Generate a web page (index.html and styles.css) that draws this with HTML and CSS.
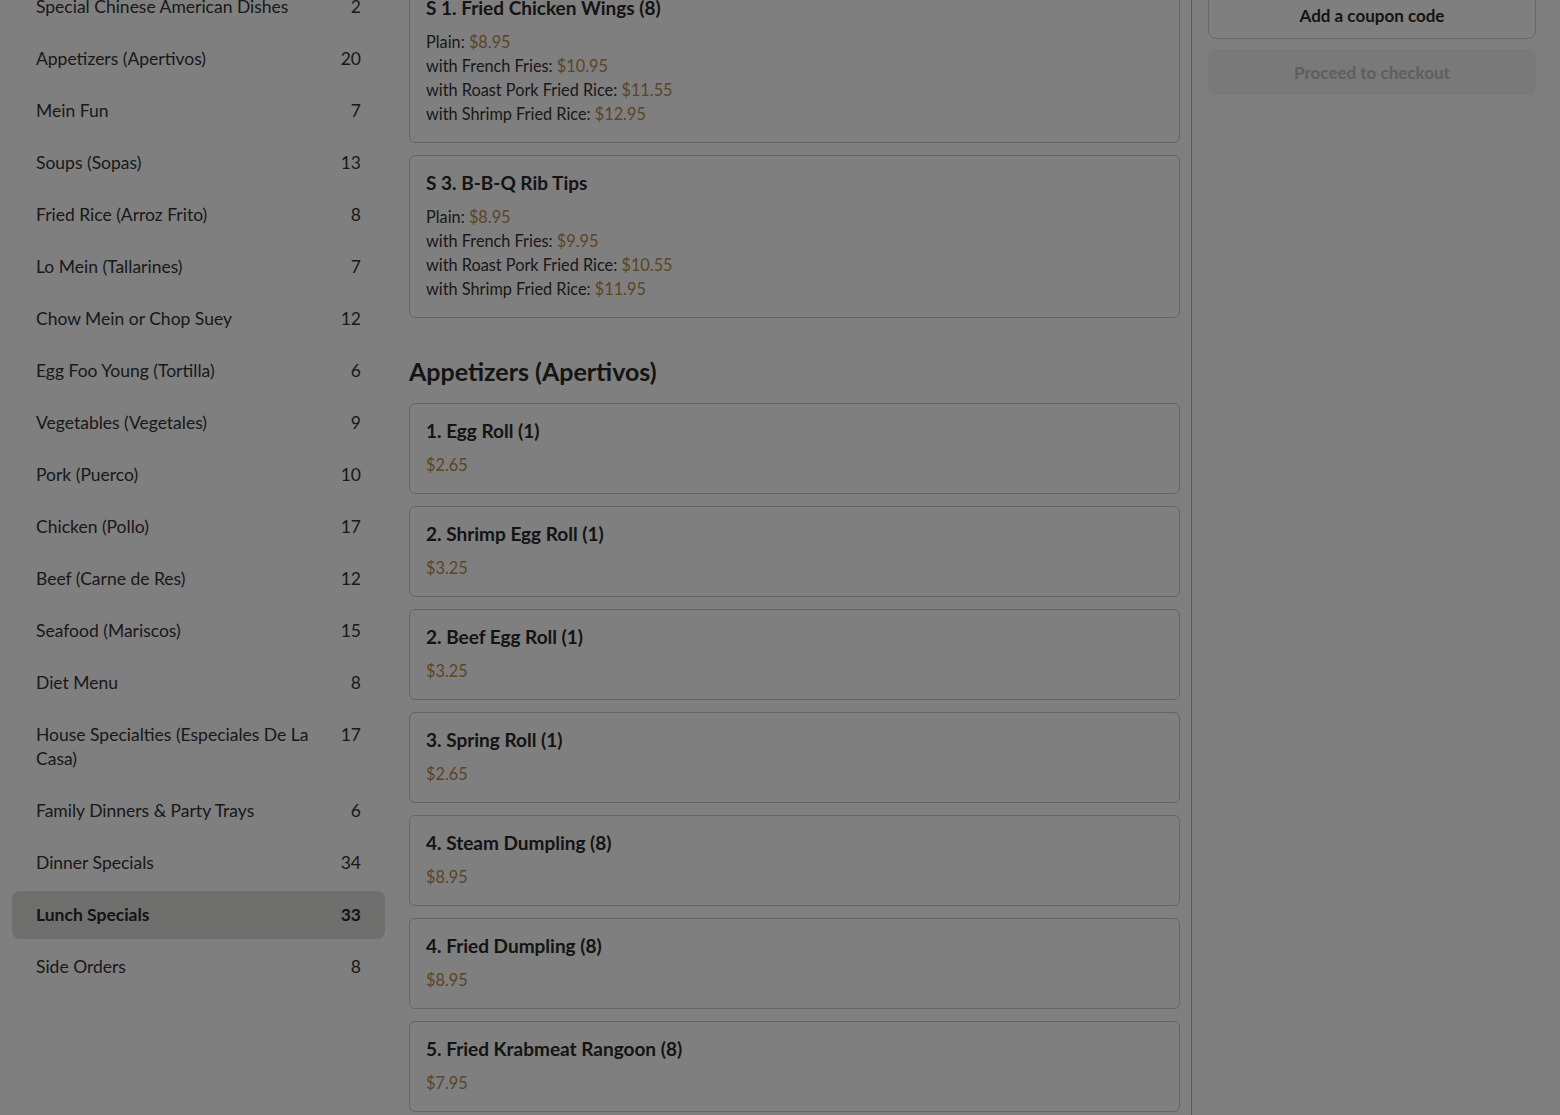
FILE: index.html
```html
<!DOCTYPE html>
<html lang="en">
<head>
<meta charset="utf-8">
<title>Menu</title>
<link rel="stylesheet" href="styles.css">
</head>
<body>
<div class="app">
  <aside class="cats">
    <ul class="cat-list">
      <li class="cat"><span class="cat-name">Special Chinese American Dishes</span><span class="cat-count">2</span></li>
      <li class="cat"><span class="cat-name">Appetizers (Apertivos)</span><span class="cat-count">20</span></li>
      <li class="cat"><span class="cat-name">Mein Fun</span><span class="cat-count">7</span></li>
      <li class="cat"><span class="cat-name">Soups (Sopas)</span><span class="cat-count">13</span></li>
      <li class="cat"><span class="cat-name">Fried Rice (Arroz Frito)</span><span class="cat-count">8</span></li>
      <li class="cat"><span class="cat-name">Lo Mein (Tallarines)</span><span class="cat-count">7</span></li>
      <li class="cat"><span class="cat-name">Chow Mein or Chop Suey</span><span class="cat-count">12</span></li>
      <li class="cat"><span class="cat-name">Egg Foo Young (Tortilla)</span><span class="cat-count">6</span></li>
      <li class="cat"><span class="cat-name">Vegetables (Vegetales)</span><span class="cat-count">9</span></li>
      <li class="cat"><span class="cat-name">Pork (Puerco)</span><span class="cat-count">10</span></li>
      <li class="cat"><span class="cat-name">Chicken (Pollo)</span><span class="cat-count">17</span></li>
      <li class="cat"><span class="cat-name">Beef (Carne de Res)</span><span class="cat-count">12</span></li>
      <li class="cat"><span class="cat-name">Seafood (Mariscos)</span><span class="cat-count">15</span></li>
      <li class="cat"><span class="cat-name">Diet Menu</span><span class="cat-count">8</span></li>
      <li class="cat"><span class="cat-name">House Specialties (Especiales De La Casa)</span><span class="cat-count">17</span></li>
      <li class="cat"><span class="cat-name">Family Dinners &amp; Party Trays</span><span class="cat-count">6</span></li>
      <li class="cat"><span class="cat-name">Dinner Specials</span><span class="cat-count">34</span></li>
      <li class="cat active"><span class="cat-name">Lunch Specials</span><span class="cat-count">33</span></li>
      <li class="cat"><span class="cat-name">Side Orders</span><span class="cat-count">8</span></li>
    </ul>
  </aside>

  <main class="menu">
    <div class="menu-inner">
      <section class="section first">
        <div class="items">
          <div class="card">
            <h3 class="card-title">S 1. Fried Chicken Wings (8)</h3>
            <p class="line">Plain: <span class="price">$8.95</span></p>
            <p class="line">with French Fries: <span class="price">$10.95</span></p>
            <p class="line">with Roast Pork Fried Rice: <span class="price">$11.55</span></p>
            <p class="line">with Shrimp Fried Rice: <span class="price">$12.95</span></p>
          </div>
          <div class="card">
            <h3 class="card-title">S 3. B-B-Q Rib Tips</h3>
            <p class="line">Plain: <span class="price">$8.95</span></p>
            <p class="line">with French Fries: <span class="price">$9.95</span></p>
            <p class="line">with Roast Pork Fried Rice: <span class="price">$10.55</span></p>
            <p class="line">with Shrimp Fried Rice: <span class="price">$11.95</span></p>
          </div>
        </div>
      </section>

      <section class="section">
        <h2 class="section-title">Appetizers (Apertivos)</h2>
        <div class="items">
          <div class="card"><h3 class="card-title">1. Egg Roll (1)</h3><p class="line"><span class="price">$2.65</span></p></div>
          <div class="card"><h3 class="card-title">2. Shrimp Egg Roll (1)</h3><p class="line"><span class="price">$3.25</span></p></div>
          <div class="card"><h3 class="card-title">2. Beef Egg Roll (1)</h3><p class="line"><span class="price">$3.25</span></p></div>
          <div class="card"><h3 class="card-title">3. Spring Roll (1)</h3><p class="line"><span class="price">$2.65</span></p></div>
          <div class="card"><h3 class="card-title">4. Steam Dumpling (8)</h3><p class="line"><span class="price">$8.95</span></p></div>
          <div class="card"><h3 class="card-title">4. Fried Dumpling (8)</h3><p class="line"><span class="price">$8.95</span></p></div>
          <div class="card"><h3 class="card-title">5. Fried Krabmeat Rangoon (8)</h3><p class="line"><span class="price">$7.95</span></p></div>
        </div>
      </section>
    </div>
  </main>

  <aside class="cart">
    <button class="btn coupon" type="button">Add a coupon code</button>
    <button class="btn checkout" type="button" disabled>Proceed to checkout</button>
  </aside>
</div>
<div class="overlay"></div>
</body>
</html>
```

FILE: styles.css
```css
* { box-sizing: border-box; }

html, body {
  margin: 0;
  height: 100%;
  overflow: hidden;
  background: #ffffff;
  font-family: "Lato", "Noto Sans", "Liberation Sans", sans-serif;
  color: #333333;
}

.app {
  display: flex;
  height: 100vh;
  overflow: hidden;
}

/* ---------- categories ---------- */
.cats {
  flex: none;
  width: 397px;
  padding: 0 12px;
}

.cat-list {
  list-style: none;
  margin: -17px 0 0;
  padding: 0;
  display: flex;
  flex-direction: column;
  gap: 4px;
}

.cat {
  display: flex;
  justify-content: space-between;
  align-items: flex-start;
  padding: 12px 24px;
  font-size: 17.5px;
  line-height: 24px;
  border-radius: 8px;
  color: #333333;
}

.cat-name { flex: 1; padding-right: 30px; }
.cat-count { flex: none; }

.cat.active {
  background: #dfdedd;
  font-weight: 700;
  color: #282828;
}

/* ---------- menu ---------- */
.menu {
  flex: none;
  width: 782px;
  margin-left: 12px;
  padding-right: 11px;
}

.menu-inner { margin-top: -20px; }

.section-title {
  margin: 37px 0 16px;
  font-size: 25px;
  line-height: 32px;
  font-weight: 700;
  color: #282828;
}

.items {
  display: flex;
  flex-direction: column;
  gap: 12px;
}

.card {
  border: 1px solid #c9c9c9;
  border-radius: 6px;
  padding: 16px 16px 16px;
  background: #ffffff;
}

.card-title {
  margin: 0 0 11px;
  font-size: 19px;
  line-height: 22px;
  font-weight: 700;
  color: #282828;
}

.line {
  margin: 0;
  font-size: 16.3px;
  line-height: 24px;
  color: #333333;
}

.price { color: #b48a4a; }

/* ---------- cart ---------- */
.cart {
  flex: 1;
  border-left: 1px solid #b4b4b4;
  padding: 0 24px 0 16px;
  display: flex;
  flex-direction: column;
  gap: 10px;
}

.btn {
  display: block;
  width: 100%;
  font-family: inherit;
  font-size: 17px;
  font-weight: 700;
  border-radius: 8px;
}

.coupon {
  margin-top: -9px;
  height: 48px;
  border: 1px solid #cfcfcf;
  background: #ffffff;
  color: #282828;
}

.checkout {
  height: 46px;
  border: none;
  background: #f3f3f3;
  color: #bdbdbd;
}

/* ---------- modal backdrop ---------- */
.overlay {
  position: fixed;
  inset: 0;
  background: rgba(0, 0, 0, 0.5);
}
```
